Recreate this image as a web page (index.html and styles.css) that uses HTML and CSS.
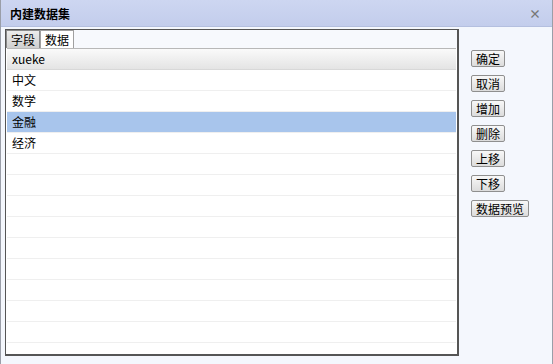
FILE: index.html
```html
<!DOCTYPE html>
<html lang="zh">
<head>
    <meta charset="UTF-8">
    <title>内建数据集</title>
    <link rel="stylesheet" href="styles.css">
</head>
<body>
    <div class="dialog">
        <div class="titlebar">
            <span class="title">内建数据集</span>
            <span class="close">&#215;</span>
        </div>
        <div class="content">
            <div class="panel">
                <div class="tabs">
                    <div class="tab active">字段</div>
                    <div class="tab">数据</div>
                </div>
                <div class="grid">
                    <div class="head">xueke</div>
                    <div class="row">中文</div>
                    <div class="row">数学</div>
                    <div class="row selected">金融</div>
                    <div class="row">经济</div>
                    <div class="row"></div>
                    <div class="row"></div>
                    <div class="row"></div>
                    <div class="row"></div>
                    <div class="row"></div>
                    <div class="row"></div>
                    <div class="row"></div>
                    <div class="row"></div>
                    <div class="row"></div>
                    <div class="row"></div>
                </div>
            </div>
            <div class="actions">
                <button>确定</button>
                <button>取消</button>
                <button>增加</button>
                <button>删除</button>
                <button>上移</button>
                <button>下移</button>
                <button>数据预览</button>
            </div>
        </div>
    </div>
</body>
</html>
```
FILE: styles.css
```css
body {
    margin: 0;
    padding: 0;
    font-family: "Noto Sans CJK SC", "Liberation Sans", sans-serif;
    font-size: 12px;
    color: #000;
}
.dialog {
    width: 553px;
    height: 364px;
    box-sizing: border-box;
    border-left: 1px solid #9a9ea8;
    border-right: 1px solid #9a9ea8;
    background: #f4f7fd;
    display: flex;
    flex-direction: column;
}
.titlebar {
    height: 27px;
    background: linear-gradient(#cdd6f1, #c3cdec);
    border-bottom: 1px solid #b4bfdf;
    box-sizing: border-box;
    display: flex;
    align-items: center;
    justify-content: space-between;
    padding: 0 11px 0 9px;
}
.title {
    font-weight: bold;
    font-size: 12px;
}
.close {
    color: #777;
    font-size: 12px;
    font-weight: bold;
}
.content {
    display: flex;
    flex: 1;
}
.panel {
    width: 454px;
    height: 327px;
    margin: 2px 0 0 4px;
    box-sizing: border-box;
    border: 1px solid #555;
    border-right-width: 2px;
    border-bottom-width: 2px;
    background: #fff;
    display: flex;
    flex-direction: column;
    overflow: hidden;
}
.tabs {
    display: flex;
    height: 18px;
    background: #f7f9fd;
}
.tab {
    height: 18px;
    padding: 0 4px;
    line-height: 17px;
    box-sizing: border-box;
    border: 1px solid #a0a0a0;
    border-bottom: none;
    background: #fff;
}
.tab.active {
    background: linear-gradient(#ececec, #cfcfcf);
    border-color: #8a8a8a;
}
.grid {
    flex: 1;
    border-top: 1px solid #b8b8b8;
    margin: 0 1px;
    overflow: hidden;
}
.head {
    height: 21px;
    line-height: 20px;
    padding-left: 5px;
    background: linear-gradient(#fafafa, #e4e4e4);
    border-bottom: 1px solid #d8d8d8;
    box-sizing: border-box;
}
.row {
    height: 21px;
    line-height: 20px;
    padding-left: 5px;
    border-bottom: 1px solid #efefef;
    box-sizing: border-box;
}
.row.selected {
    background: #a8c5ec;
}
.actions {
    display: flex;
    flex-direction: column;
    align-items: flex-start;
    gap: 8px;
    padding: 23px 0 0 12px;
}
button {
    font-family: "Noto Sans CJK SC", "Liberation Sans", sans-serif;
    font-size: 12px;
    height: 17px;
    padding: 0 4px;
    line-height: 15px;
    border: 1px solid #8f8f8f;
    border-radius: 2px;
    background: linear-gradient(#f8f8f8, #dcdcdc);
    color: #000;
}
```
